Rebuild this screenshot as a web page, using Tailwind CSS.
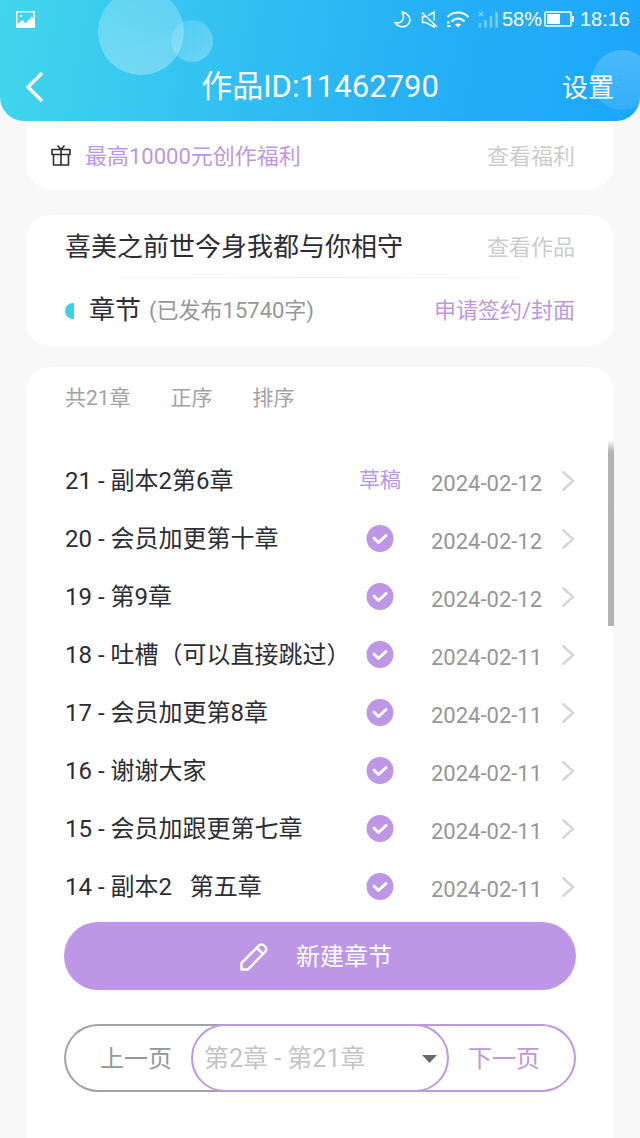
<!DOCTYPE html>
<html lang="zh-CN">
<head>
    <meta charset="UTF-8">
    <meta name="viewport" content="width=device-width, initial-scale=1.0">
    <title>作品ID:11462790</title>
    <script src="https://cdn.jsdelivr.net/npm/@tailwindcss/browser@4"></script>
</head>
<body class="min-h-screen flex flex-col bg-[#f8f8f8] font-[Roboto,'Noto_Sans_CJK_SC',sans-serif] text-[#2c2c34]">
    <header class="relative overflow-hidden rounded-b-3xl bg-[linear-gradient(100deg,#41d6ec_0%,#35c4f1_30%,#26b0f6_65%,#1ca6fc_100%)] text-white">
        <!-- bubbles -->
        <div class="absolute left-[171px] top-5 size-[42px] rounded-full bg-linear-to-br from-white/10 to-white/30"></div>
        <div class="absolute left-[98px] -top-[11px] size-[86px] rounded-full bg-linear-to-b from-white/20 to-white/30"></div>
        <div class="absolute -right-3 top-[50px] size-[60px] rounded-full bg-linear-to-b from-white/20 to-white/10"></div>

        <!-- status bar -->
        <div class="relative flex h-[38px] items-center pl-4 pr-[10px]">
            <svg class="h-[17px] w-[19px]" viewBox="0 0 19 17" fill="currentColor">
                <path fill-rule="evenodd" d="M0 0h19v17H0zM1.500 1.500v11.500l5-4 3 3.500 2.500-3 1.500-1 2-3 2 1.500v-5.500zM4 4h2v2H4z"/>
            </svg>
            <div class="ml-auto flex items-center">
                <svg class="h-[17px] w-[17px]" viewBox="0 0 17 17" fill="none" stroke="currentColor" stroke-width="1.600" stroke-linejoin="round">
                    <path d="M8 1c6 1 9 6 7.500 10C13.500 17 5 17.500 1 11.500C7 13.500 12 8 8 1z"/>
                </svg>
                <svg class="ml-[10px] h-[17px] w-[17px]" viewBox="0 0 17 17" fill="none" stroke="currentColor" stroke-width="1.500">
                    <path d="M1 1.500l15 14.500M5 5.500H1.500v6H5l8 4.500v-3M7.500 4.500L13 1v8.500"/>
                </svg>
                <svg class="ml-2 h-[17px] w-6" viewBox="0 0 24 17" fill="none" stroke="currentColor" stroke-width="2.200">
                    <path d="M1.500 6c6-6 15-6 21 0M5.500 10.500c4-4 9-4 13 0"/>
                    <path d="M9 13.500c2-1.500 4-1.500 6 0L12 16.500z" fill="currentColor" stroke="none"/>
                    <path d="M1 11.500h2.500M1 15h3.500" stroke-width="2"/>
                </svg>
                <svg class="ml-2 h-[17px] w-5 opacity-40" viewBox="0 0 20 17" fill="none" stroke="currentColor">
                    <path d="M2 12v4.500M7.500 9v7.500M13 5v11.500M18.500 1v15.500" stroke-width="2.500"/>
                    <path d="M1 1l4 4M5 1L1 5" stroke-width="1.500"/>
                </svg>
                <span class="ml-1 font-['Liberation_Sans'] text-[20px] leading-6">58%</span>
                <svg class="ml-[2px] h-4 w-[30px]" viewBox="0 0 30 16">
                    <rect x="1" y="1" width="26" height="14" rx="1" fill="none" stroke="currentColor" stroke-width="1.500"/>
                    <path d="M3 3h13v10H3zM28 5h2v6h-2z" fill="currentColor"/>
                </svg>
                <span class="ml-[6px] font-['Liberation_Sans'] text-[20px] leading-6">18:16</span>
            </div>
        </div>

        <!-- title bar -->
        <div class="relative mt-[15px] grid h-[68px] grid-cols-[1fr_auto_1fr] items-center px-[26px]">
            <a href="#" aria-label="返回">
                <svg class="h-[30px] w-[17px]" viewBox="0 0 17 30" fill="none" stroke="currentColor" stroke-width="3.500" stroke-linecap="round" stroke-linejoin="round">
                    <path d="M15 2L2 15l13 13"/>
                </svg>
            </a>
            <h1 class="text-[31px]">作品ID:11462790</h1>
            <a href="#" class="justify-self-end pt-[2px] text-[26px]">设置</a>
        </div>
    </header>

    <main class="flex flex-1 flex-col px-[26px]">
        <section class="flex h-[68px] items-center rounded-b-3xl bg-white pl-[25px] pr-[39px] text-[22px]">
            <svg class="h-[22px] w-5" viewBox="0 0 20 22" fill="none" stroke="currentColor" stroke-width="1.600" stroke-linejoin="round">
                <path d="M1 5.500h18v5H1zM2.500 10.500V21h15V10.500M10 5.500V21M6.500 1.500L10 5.500l3.500-4"/>
            </svg>
            <a href="#" class="ml-[14px] pt-[2px] text-[#bc97e2]">最高10000元创作福利</a>
            <a href="#" class="ml-auto pt-[2px] text-[#cbcdcb]">查看福利</a>
        </section>

        <section class="mt-[26px] rounded-3xl bg-white px-[39px] pb-[5px]">
            <div class="flex h-[62px] items-center pt-[2px]">
                <h2 class="text-[26px]">喜美之前世今身我都与你相守</h2>
                <a href="#" class="ml-auto text-[22px] text-[#cbcdcb]">查看作品</a>
            </div>
            <div class="h-px bg-linear-to-r from-transparent via-[#eeeeee] to-transparent"></div>
            <div class="flex h-[63px] items-center pt-[2px]">
                <span class="h-4 w-[9px] rounded-l-full bg-[#3fd0e6]"></span>
                <h3 class="ml-[15px] text-[26px]">章节</h3>
                <span class="ml-2 text-[22px] text-[#969696]">(已发布15740字)</span>
                <a href="#" class="ml-auto text-[22px] text-[#bc97e2]">申请签约/封面</a>
            </div>
        </section>

        <section class="mt-[21px] flex-1 rounded-t-3xl bg-white pb-[46px]">
            <div class="flex h-[62px] items-center gap-10 px-[39px] pt-[2px] text-[21px] text-[#a0a3a3]">
                <span>共21章</span>
                <button type="button">正序</button>
                <button type="button">排序</button>
            </div>

            <div class="relative mt-[11px] pt-3">
                <div class="absolute right-0 top-0 h-[186px] w-[6px] bg-linear-to-b from-white to-[#b3b3b3] to-[12px]"></div>
                <ul id="chapterList" class="px-[39px]"></ul>
            </div>

            <div class="mt-[6px] px-[38px]">
                <button type="button" class="flex h-[68px] w-full items-center justify-center gap-7 rounded-full bg-[#bd96e6] pr-2 pt-[2px] text-2xl text-white">
                    <svg class="size-7" viewBox="0 0 28 28" fill="none" stroke="currentColor" stroke-width="2.500" stroke-linejoin="round">
                        <path d="M1.500 26.500v-6.500L19 2.500c3.500-3 9 2 6.500 6L8 26.500zM17 5l6 6"/>
                    </svg>
                    新建章节
                </button>

                <div class="mt-[34px] flex h-[68px] text-2xl">
                    <button type="button" class="flex-1 rounded-l-full border-2 border-r-0 border-[#a0a3a3] pl-[34px] pt-[2px] text-left text-[#969696]">上一页</button>
                    <div class="relative z-10 -mx-[34px] w-[258px]">
                        <select aria-label="章节范围" class="h-full w-full appearance-none rounded-full border-2 border-[#bc97e2] bg-white pl-[11px] pt-[2px] text-[25px] text-[#c3c5c5]">
                            <option>第2章 - 第21章</option>
                            <option>第1章</option>
                        </select>
                        <svg class="pointer-events-none absolute right-3 top-[31px] h-2 w-[15px]" viewBox="0 0 15 8" fill="#6a6a6a">
                            <path d="M0 0h15L7.500 8z"/>
                        </svg>
                    </div>
                    <button type="button" class="flex-1 rounded-r-full border-2 border-l-0 border-[#bc97e2] pr-[34px] pt-[2px] text-right text-[#bc97e2]">下一页</button>
                </div>
            </div>
        </section>
    </main>

    <script>
        const chapters = [
            { title: '21 - 副本2第6章', date: '2024-02-12', draft: true },
            { title: '20 - 会员加更第十章', date: '2024-02-12' },
            { title: '19 - 第9章', date: '2024-02-12' },
            { title: '18 - 吐槽（可以直接跳过）', date: '2024-02-11' },
            { title: '17 - 会员加更第8章', date: '2024-02-11' },
            { title: '16 - 谢谢大家', date: '2024-02-11' },
            { title: '15 - 会员加跟更第七章', date: '2024-02-11' },
            { title: '14 - 副本2&nbsp;&nbsp; 第五章', date: '2024-02-11' }
        ];

        const published = `
            <svg class="size-7" viewBox="0 0 28 28" role="img" aria-label="已发布">
                <circle cx="14" cy="13.500" r="13.500" fill="#bd96e6"/>
                <path d="M8 13l4.500 4.500L20 10.500" fill="none" stroke="#fff" stroke-width="3" stroke-linecap="round" stroke-linejoin="round"/>
            </svg>`;

        document.getElementById('chapterList').innerHTML = chapters.map(chapter => `
            <li>
                <a href="#" class="grid h-[58px] grid-cols-[1fr_72px_130px_14px] items-center">
                    <span class="whitespace-nowrap text-2xl">${chapter.title}</span>
                    <span class="flex w-[42px] justify-center whitespace-nowrap text-[21px] text-[#bc97e2]">${chapter.draft ? '草稿' : published}</span>
                    <span class="pt-1 text-[22px] text-[#969696]">${chapter.date}</span>
                    <svg class="h-[22px] w-[14px]" viewBox="0 0 14 22" fill="none" stroke="#d6d6d6" stroke-width="2.500">
                        <path d="M1.500 1.500L12 11 1.500 20.500"/>
                    </svg>
                </a>
            </li>`).join('');
    </script>
</body>
</html>
